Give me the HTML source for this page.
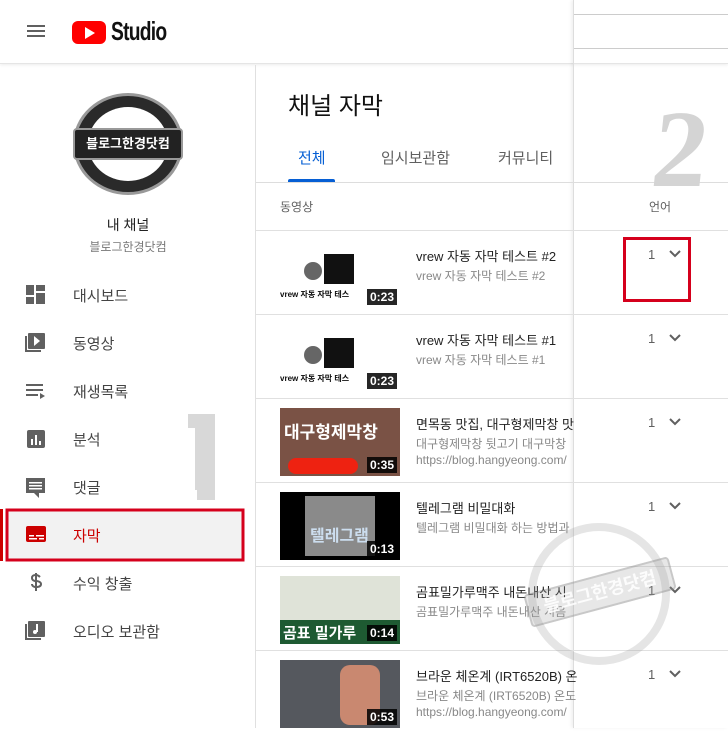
<!DOCTYPE html>
<html><head><meta charset="utf-8"><style>
*{margin:0;padding:0;box-sizing:border-box}
body{width:728px;height:728px;overflow:hidden;background:#fff;font-family:"Liberation Sans","Noto Sans CJK KR",sans-serif;position:relative;color:#0d0d0d}
.a{position:absolute}
.hdr{left:0;top:0;width:728px;height:64px;border-bottom:1px solid #e5e5e5;box-shadow:0 1px 3px rgba(0,0,0,.08)}
.nav{left:0;top:65px;width:256px;height:663px;border-right:1px solid #e0e0e0}
.ni{position:absolute;left:73px;font-size:15px;color:#444}
.row{left:256px;width:472px;height:84px;border-top:1px solid #e0e0e0}
.th{position:absolute;left:24px;top:9px;width:120px;height:68px;overflow:hidden}
.dur{position:absolute;right:3px;bottom:3px;background:rgba(0,0,0,.85);color:#fff;font-size:12px;font-weight:bold;padding:1px 3px}
.t1{position:absolute;left:160px;top:15px;font-size:13px;color:#222;white-space:nowrap}
.t2{position:absolute;left:160px;top:36px;font-size:12px;color:#888;white-space:nowrap}
.t3{position:absolute;left:160px;top:54px;font-size:12px;color:#888;white-space:nowrap}
.n{position:absolute;left:392px;top:16px;font-size:13px;color:#606060}
.cv{position:absolute;left:412px;top:18px;width:14px;height:10px}
</style></head><body>
<div class="a hdr">
 <div class="a" style="left:27px;top:25px;width:18px;height:2px;background:#606060;box-shadow:0 5px 0 #606060,0 10px 0 #606060"></div>
 <div class="a" style="left:72px;top:21px;width:34px;height:23px;background:#f00;border-radius:6px"></div>
 <div class="a" style="left:85px;top:27px;width:0;height:0;border-left:10px solid #fff;border-top:6px solid transparent;border-bottom:6px solid transparent"></div>
 <div class="a" style="left:111px;top:16px;font-size:26px;font-weight:bold;letter-spacing:-1px;transform:scaleX(.74);transform-origin:left;color:#111">Studio</div>
</div>
<div class="a" style="left:573px;top:0;width:155px;height:728px;border-left:1px solid #ddd;box-shadow:-2px 0 3px rgba(0,0,0,.06)"></div>
<div class="a" style="left:574px;top:14px;width:154px;height:35px;border-top:1px solid #ccc;border-bottom:1px solid #ccc"></div>
<div class="a nav">
 <div class="a" style="left:73px;top:28px;width:110px;height:102px;border-radius:50%;background:#2a2a2a;border:3px solid #999"></div>
 <div class="a" style="left:88px;top:42px;width:80px;height:74px;border-radius:50%;background:#fff"></div>
 <div class="a" style="left:73px;top:63px;width:110px;height:32px;background:#222;border:2px solid #999;border-radius:4px;color:#fff;font-size:13px;font-weight:bold;text-align:center;line-height:28px">블로그한경닷컴</div>
 <div class="a" style="left:0;width:256px;top:150px;text-align:center;font-size:14px;color:#222">내 채널</div>
 <div class="a" style="left:0;width:256px;top:173px;text-align:center;font-size:12px;color:#777">블로그한경닷컴</div>
</div>
<svg class="a" style="left:0;top:0" width="256" height="728">
 <g fill="#606060">
 <rect x="26" y="285" width="8" height="10"/><rect x="36" y="285" width="9" height="6"/><rect x="26" y="297" width="8" height="7"/><rect x="36" y="293" width="9" height="11"/>
 <rect x="28" y="333" width="17" height="16" rx="1"/><path d="M25 336v16h16v-2H27v-14z"/><path d="M34 336l6 5-6 5z" fill="#fff"/>
 <rect x="26" y="384" width="17" height="2"/><rect x="26" y="389" width="17" height="2"/><rect x="26" y="394" width="12" height="2"/><path d="M40 393l5 3-5 3z"/>
 <rect x="27" y="430" width="18" height="18" rx="2"/>
 <path d="M26 478h19v15h-6v5l-5-5H26z"/>
 <path d="M40 577c-1-1-2-2-4-2-3 0-4 1-4 3s2 3 4 3 5 1 5 3-2 3-5 3c-2 0-4-1-4-3" fill="none" stroke="#606060" stroke-width="2"/><rect x="35" y="573" width="2" height="18"/>
 <rect x="28" y="621" width="17" height="16" rx="1"/><path d="M25 624v16h16v-2H27v-14z"/>
 </g>
 <g fill="#fff"><rect x="31" y="439" width="2" height="6"/><rect x="35" y="435" width="2" height="10"/><rect x="39" y="441" width="2" height="4"/>
 <rect x="29" y="482" width="13" height="1.5"/><rect x="29" y="485" width="13" height="1.5"/><rect x="29" y="488" width="13" height="1.5"/>
 <rect x="36" y="624" width="2" height="8"/><circle cx="35" cy="632" r="2"/></g>
 <rect x="0" y="509" width="3" height="52" fill="#cc0000"/>
 <rect x="7" y="510" width="236" height="50" fill="#f2f2f2" stroke="#d5001c" stroke-width="3"/>
 <rect x="26" y="526" width="20" height="16" rx="2" fill="#cc0000"/>
 <g fill="#fff"><rect x="29" y="535" width="5" height="1.5"/><rect x="36" y="535" width="8" height="1.5"/><rect x="29" y="538" width="8" height="1.5"/><rect x="39" y="538" width="5" height="1.5"/></g>
 <path d="M188 414h27v86h-18v-10h-2v-62h-7z" fill="#d8d8d8"/>
</svg>
<div class="ni" style="top:285px">대시보드</div>
<div class="ni" style="top:333px">동영상</div>
<div class="ni" style="top:381px">재생목록</div>
<div class="ni" style="top:429px">분석</div>
<div class="ni" style="top:477px">댓글</div>
<div class="ni" style="top:525px;color:#cc0000">자막</div>
<div class="ni" style="top:573px">수익 창출</div>
<div class="ni" style="top:621px">오디오 보관함</div>

<div class="a" style="left:288px;top:86px;font-size:24px;color:#111">채널 자막</div>
<div class="a" style="left:298px;top:147px;font-size:15px;color:#065fd4">전체</div>
<div class="a" style="left:381px;top:147px;font-size:15px;color:#606060">임시보관함</div>
<div class="a" style="left:498px;top:147px;font-size:15px;color:#606060">커뮤니티</div>
<div class="a" style="left:288px;top:179px;width:47px;height:3px;background:#065fd4;border-radius:2px 2px 0 0"></div>
<div class="a" style="left:256px;top:182px;width:472px;height:1px;background:#ddd"></div>
<div class="a" style="left:653px;top:105px;font-size:110px;font-weight:bold;color:#d4d4d4;font-family:'Liberation Serif',serif;line-height:88px;transform:skewX(-6deg)">2</div>
<div class="a" style="left:280px;top:198px;font-size:12px;color:#606060">동영상</div>
<div class="a" style="left:649px;top:198px;font-size:12px;color:#606060">언어</div>

<div class="a row" style="top:230px">
 <div class="th" style="background:#fff"><div style="position:absolute;left:24px;top:22px;width:18px;height:18px;border-radius:50%;background:#666"></div><div style="position:absolute;left:44px;top:14px;width:30px;height:30px;background:#111"></div><div style="position:absolute;left:0;top:49px;font-size:8px;font-weight:bold">vrew 자동 자막 테스</div><div class="dur">0:23</div></div>
 <div class="t1">vrew 자동 자막 테스트 #2</div><div class="t2">vrew 자동 자막 테스트 #2</div>
 <div class="n">1</div><svg class="cv" viewBox="0 0 14 10"><path d="M2 2l5 5 5-5" fill="none" stroke="#606060" stroke-width="2"/></svg>
</div>
<div class="a row" style="top:314px">
 <div class="th" style="background:#fff"><div style="position:absolute;left:24px;top:22px;width:18px;height:18px;border-radius:50%;background:#666"></div><div style="position:absolute;left:44px;top:14px;width:30px;height:30px;background:#111"></div><div style="position:absolute;left:0;top:49px;font-size:8px;font-weight:bold">vrew 자동 자막 테스</div><div class="dur">0:23</div></div>
 <div class="t1">vrew 자동 자막 테스트 #1</div><div class="t2">vrew 자동 자막 테스트 #1</div>
 <div class="n">1</div><svg class="cv" viewBox="0 0 14 10"><path d="M2 2l5 5 5-5" fill="none" stroke="#606060" stroke-width="2"/></svg>
</div>
<div class="a row" style="top:398px">
 <div class="th" style="background:#7a5245"><div style="position:absolute;left:4px;top:10px;font-size:17px;font-weight:bold;color:#fff">대구형제막창</div><div style="position:absolute;left:8px;top:50px;width:70px;height:16px;background:#e21;border-radius:8px"></div><div class="dur">0:35</div></div>
 <div class="t1">면목동 맛집, 대구형제막창 맛</div><div class="t2">대구형제막창 뒷고기 대구막창</div><div class="t3">https://blog.hangyeong.com/</div>
 <div class="n">1</div><svg class="cv" viewBox="0 0 14 10"><path d="M2 2l5 5 5-5" fill="none" stroke="#606060" stroke-width="2"/></svg>
</div>
<div class="a row" style="top:482px">
 <div class="th" style="background:#000"><div style="position:absolute;left:25px;top:4px;width:70px;height:60px;background:#8a8a8a"></div><div style="position:absolute;left:30px;top:30px;font-size:16px;font-weight:bold;color:#cde">텔레그램</div><div class="dur">0:13</div></div>
 <div class="t1">텔레그램 비밀대화</div><div class="t2">텔레그램 비밀대화 하는 방법과</div>
 <div class="n">1</div><svg class="cv" viewBox="0 0 14 10"><path d="M2 2l5 5 5-5" fill="none" stroke="#606060" stroke-width="2"/></svg>
</div>
<div class="a row" style="top:566px">
 <div class="th" style="background:#dfe3d8"><div style="position:absolute;left:0;top:44px;width:120px;height:24px;background:#1e5a32"></div><div style="position:absolute;left:3px;top:46px;font-size:15px;font-weight:bold;color:#fff">곰표 밀가루</div><div class="dur">0:14</div></div>
 <div class="t1">곰표밀가루맥주 내돈내산 시</div><div class="t2">곰표밀가루맥주 내돈내산 시음</div>
 <div class="n">1</div><svg class="cv" viewBox="0 0 14 10"><path d="M2 2l5 5 5-5" fill="none" stroke="#606060" stroke-width="2"/></svg>
</div>
<div class="a row" style="top:650px">
 <div class="th" style="background:#55585e"><div style="position:absolute;left:60px;top:5px;width:40px;height:60px;background:#c98870;border-radius:10px"></div><div class="dur">0:53</div></div>
 <div class="t1">브라운 체온계 (IRT6520B) 온</div><div class="t2">브라운 체온계 (IRT6520B) 온도</div><div class="t3">https://blog.hangyeong.com/</div>
 <div class="n">1</div><svg class="cv" viewBox="0 0 14 10"><path d="M2 2l5 5 5-5" fill="none" stroke="#606060" stroke-width="2"/></svg>
</div>
<div class="a" style="left:623px;top:237px;width:68px;height:65px;border:3px solid #d5001c"></div>
<div class="a" style="left:528px;top:523px;width:142px;height:142px;border-radius:50%;border:8px solid rgba(150,150,150,.25)"></div>
<div class="a" style="left:525px;top:575px;width:150px;height:34px;background:rgba(160,160,160,.25);border:2px solid rgba(130,130,130,.3);border-radius:4px;transform:rotate(-15deg);color:rgba(255,255,255,.85);font-size:18px;font-weight:bold;text-align:center;line-height:30px">블로그한경닷컴</div>
</body></html>
